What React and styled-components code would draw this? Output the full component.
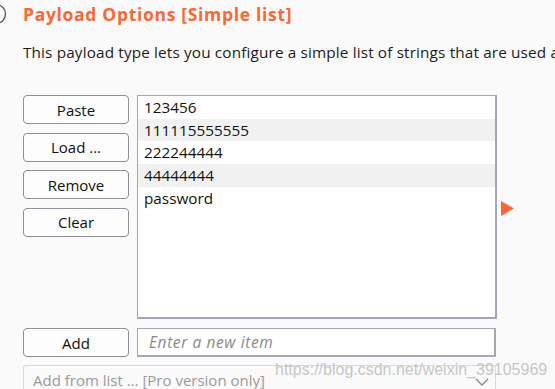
import React from "react";
import styled, { createGlobalStyle } from "styled-components";

const Global = createGlobalStyle`
  html, body { margin: 0; padding: 0; background: #fafafa; overflow: hidden; }
  body { font-family: "Open Sans", "Noto Sans", sans-serif; color: #1a1a1a; }
`;

const Page = styled.div`
  position: relative;
  width: 555px;
  height: 389px;
  overflow: hidden;
  box-sizing: border-box;
  padding-top: 3px;
`;

const Header = styled.div`
  display: flex;
  align-items: center;
  height: 22px;
`;

const HelpIcon = styled.svg`
  width: 8px;
  height: 22px;
  margin-right: 15px;
  flex: none;
`;

const Title = styled.h1`
  margin: 0;
  font-size: 17.5px;
  letter-spacing: 0.68px;
  font-weight: 700;
  color: #ff6633;
  white-space: nowrap;
`;

const Body = styled.div`
  padding-left: 23px;
`;

const Description = styled.p`
  margin: 17px 0 0;
  font-size: 15.3px;
  letter-spacing: 0.15px;
  line-height: 20px;
  white-space: nowrap;
  color: #1c1c1c;
`;

const Main = styled.div`
  display: flex;
  gap: 8px;
  margin-top: 33px;
  align-items: stretch;
`;

const ButtonColumn = styled.div`
  display: flex;
  flex-direction: column;
  gap: 8.5px;
  width: 106px;
`;

const Button = styled.button`
  box-sizing: border-box;
  width: 106px;
  height: 29px;
  border: 1px solid #8e8e99;
  border-radius: 4px;
  background: #fdfdfd;
  font-family: inherit;
  font-size: 15px;
  color: #111;
  padding: 0;
  cursor: pointer;
`;

const ListBox = styled.div`
  box-sizing: border-box;
  width: 360px;
  height: 224px;
  background: #fff;
  border: 1px solid #a6a5b5;
  border-width: 1px 2px 2px 1px;
  display: flex;
  flex-direction: column;
`;

const Row = styled.div`
  height: 22.7px;
  line-height: 22.7px;
  padding-left: 6px;
  font-size: 15.3px;
  color: #111;
  background: ${(p) => (p.$shaded ? "#f1f1f1" : "#ffffff")};
`;

const Arrow = styled.svg`
  align-self: center;
  width: 13px;
  height: 15px;
  margin-left: -4px;
  margin-top: 2px;
`;

const AddRow = styled.div`
  display: flex;
  gap: 8px;
  margin-top: 9px;
`;

const TextInput = styled.input`
  box-sizing: border-box;
  width: 359px;
  height: 29px;
  border: 1px solid #a6a5b5;
  border-width: 1px 2px 2px 1px;
  background: #fff;
  padding: 0 11px;
  font-family: inherit;
  font-size: 15.5px;
  outline: none;
  &::placeholder {
    font-style: italic;
    letter-spacing: 0.6px;
    color: #8a8a8a;
  }
`;

const Select = styled.div`
  box-sizing: border-box;
  width: 473px;
  height: 30px;
  margin-top: 8px;
  border: 1px solid #d8d8de;
  border-radius: 3px;
  background: #fafafa;
  display: flex;
  align-items: center;
  justify-content: space-between;
  padding: 0 6px 0 9px;
  font-size: 15px;
  color: #9a9a9a;
`;

const Chevron = styled.svg`
  width: 14px;
  height: 10px;
  margin-top: 4px;
`;

const Watermark = styled.div`
  position: absolute;
  left: 275px;
  top: 361px;
  font-family: "Liberation Sans", Arial, sans-serif;
  font-size: 16px;
  color: rgba(180, 180, 180, 0.75);
  white-space: nowrap;
  pointer-events: none;
`;

const items = ["123456", "111115555555", "222244444", "44444444", "password"];

export default function App() {
  return (
    <Page>
      <Global />
      <Header>
        <HelpIcon viewBox="0 0 8 22">
          <circle cx="-4" cy="11" r="9.5" fill="none" stroke="#555" strokeWidth="1.3" />
        </HelpIcon>
        <Title>Payload Options [Simple list]</Title>
      </Header>
      <Body>
        <Description>
          This payload type lets you configure a simple list of strings that are used as payloads.
        </Description>
        <Main>
          <ButtonColumn>
            <Button>Paste</Button>
            <Button>Load ...</Button>
            <Button>Remove</Button>
            <Button>Clear</Button>
          </ButtonColumn>
          <ListBox>
            {items.map((it, i) => (
              <Row key={it} $shaded={i % 2 === 1}>
                {it}
              </Row>
            ))}
          </ListBox>
          <Arrow viewBox="0 0 13 15">
            <polygon points="0,0 13,7.5 0,15" fill="#ff6633" />
          </Arrow>
        </Main>
        <AddRow>
          <Button>Add</Button>
          <TextInput placeholder="Enter a new item" />
        </AddRow>
        <Select>
          <span>Add from list ... [Pro version only]</span>
          <Chevron viewBox="0 0 14 10">
            <polyline points="1,2 7,8 13,2" fill="none" stroke="#888" strokeWidth="1.3" />
          </Chevron>
        </Select>
      </Body>
      <Watermark>https://blog.csdn.net/weixin_39105969</Watermark>
    </Page>
  );
}
